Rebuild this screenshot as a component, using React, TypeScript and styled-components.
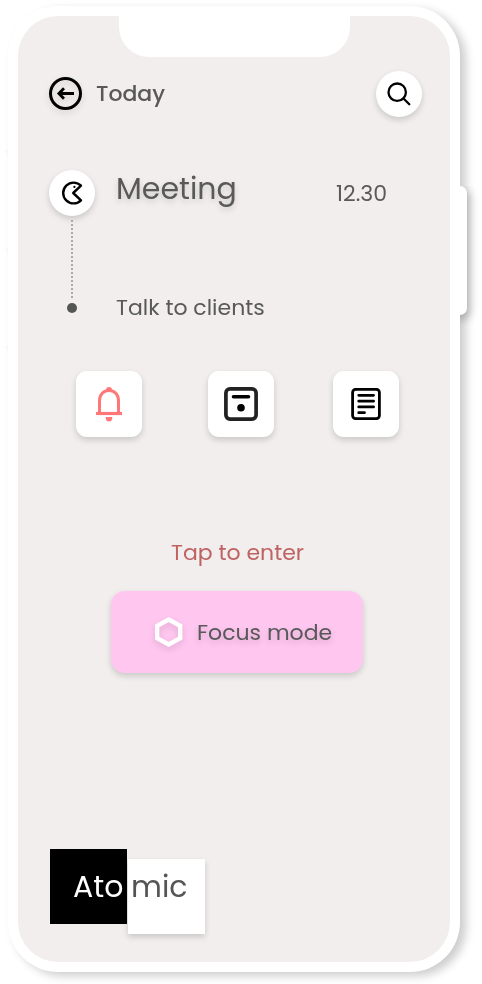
import React from "react";
import styled, { createGlobalStyle } from "styled-components";

const GlobalStyle = createGlobalStyle`
  * { box-sizing: border-box; }
  body {
    margin: 0;
    background: #fff;
    font-family: Poppins, Inter, "Open Sans", sans-serif;
    color: #595959;
  }
`;

const softShadow = "0 3px 6px rgba(0, 0, 0, 0.16)";

const Stage = styled.main`
  position: relative;
  width: 482px;
  height: 984px;
  overflow: hidden;
  padding: 6px 0 0 8px;
`;

const SideButton = styled.div<{ $top: number }>`
  position: absolute;
  left: 1px;
  top: ${(p) => p.$top}px;
  width: 14px;
  height: 62px;
  border-radius: 6px;
  background: #fff;
  box-shadow: 4px 4px 4px rgba(0, 0, 0, 0.04);
`;

const PowerButton = styled.div`
  position: absolute;
  left: 447px;
  top: 186px;
  width: 20px;
  height: 129px;
  border-radius: 7px;
  background: #fff;
  box-shadow: 4px 4px 8px rgba(0, 0, 0, 0.22);
  clip-path: inset(0 -20px -20px 13px);
`;

const Phone = styled.div`
  position: relative;
  width: 452px;
  height: 966px;
  padding: 10px;
  border-radius: 50px;
  background: #fff;
  box-shadow: 6px 4px 10px rgba(0, 0, 0, 0.2);
`;

const Screen = styled.div`
  width: 432px;
  height: 946px;
  border-radius: 40px;
  background: #f1eeed;
  display: flex;
  flex-direction: column;
  will-change: transform;
`;

const Notch = styled.div`
  width: 231px;
  height: 41px;
  margin-left: 101px;
  border-radius: 0 0 30px 30px;
  background: #fff;
  flex: none;
`;

const Header = styled.header`
  display: flex;
  align-items: center;
  height: 46px;
  margin: 14px 28px 0 31px;
`;

const Shadowed = styled.span`
  display: flex;
  filter: drop-shadow(0 3px 3px rgba(0, 0, 0, 0.12));
`;

const BackIcon = styled(Shadowed)`
  margin-top: -1px;
`;

const Round = styled.div`
  display: grid;
  place-items: center;
  width: 46px;
  height: 46px;
  border-radius: 50%;
  background: #fff;
  box-shadow: ${softShadow};
`;

const Label = styled.span<{ $size?: number; $weight?: number; $lift?: boolean }>`
  font-size: ${(p) => p.$size ?? 22}px;
  line-height: 32px;
  font-weight: ${(p) => p.$weight ?? 400};
  white-space: nowrap;
  text-shadow: ${(p) => (p.$lift ? "0 3px 6px rgba(0,0,0,.16)" : "none")};
`;

const HeaderTitle = styled.h1`
  flex: 1;
  display: flex;
  margin: 0 0 0 14px;
`;

const Event = styled.section`
  display: grid;
  grid-template-columns: 46px 241px 1fr;
  grid-template-rows: 46px 82px 20px;
  align-items: center;
  margin: 53px 31px 0;
  & > :nth-child(2) { margin: -8px 0 0 21px; }
  & > :nth-child(3) { margin-top: 2px; }
`;

const Connector = styled.div`
  align-self: end;
  justify-self: center;
  width: 2px;
  height: 78px;
  background: repeating-linear-gradient(#aaa 0 2px, transparent 2px 4px);
`;

const Client = styled.div`
  grid-column: 1 / -1;
  display: flex;
  align-items: center;
`;

const Dot = styled.i`
  width: 10px;
  height: 10px;
  margin: 0 39px 0 18px;
  border-radius: 50%;
  background: #555;
`;

const Actions = styled.nav`
  display: grid;
  grid-template-columns: 132px 125px 66px;
  margin: 53px 0 0 58px;
`;

const Tile = styled.button`
  display: grid;
  place-items: center;
  width: 66px;
  height: 66px;
  padding: 0;
  border: 0;
  border-radius: 11px;
  background: #fff;
  box-shadow: ${softShadow};
`;

const Prompt = styled.p`
  display: flex;
  margin: 100px 0 0 153px;
  color: #bf6262;
`;

const Focus = styled.button`
  display: flex;
  align-items: center;
  gap: 14px;
  width: 252px;
  height: 82px;
  margin: 22px 0 0 93px;
  padding: 1px 0 0 44px;
  border: 0;
  border-radius: 14px;
  background: #ffc6f0;
  color: inherit;
  font: inherit;
  box-shadow: ${softShadow};
  & > :first-child { margin-top: -2px; }
`;

const Brand = styled.footer`
  display: flex;
  gap: 1px;
  margin: auto 0 28px 32px;
`;

const BrandHalf = styled.div<{ $dark?: boolean }>`
  width: 77px;
  height: 75px;
  margin: ${(p) => (p.$dark ? "0 0 10px" : "10px 0 0")};
  padding: ${(p) => (p.$dark ? "22px 0 0 23px" : "12px 0 0 3px")};
  background: ${(p) => (p.$dark ? "#000" : "#fff")};
  color: ${(p) => (p.$dark ? "#fff" : "#555")};
  box-shadow: ${(p) => (p.$dark ? "none" : softShadow)};
`;

export default function App() {
  return (
    <>
      <GlobalStyle />
      <Stage>
        <SideButton $top={88} />
        <SideButton $top={186} />
        <SideButton $top={284} />
        <Phone>
          <Screen>
            <Notch />
            <Header>
              <BackIcon>
                <svg width="33" height="33" viewBox="0 0 33 33" fill="none" stroke="#000">
                  <circle cx="16.5" cy="16.5" r="15" strokeWidth="3" />
                  <path d="M25 16.5H10M15 11.3L9.9 16.5l5.1 5.2" strokeWidth="2.8" />
                </svg>
              </BackIcon>
              <HeaderTitle><Label $weight={500}>Today</Label></HeaderTitle>
              <Round>
                <svg width="24" height="24" viewBox="0 0 24 24" fill="none" stroke="#000" strokeWidth="2.3" strokeLinecap="round">
                  <circle cx="10.2" cy="10.2" r="8.7" />
                  <path d="M16.5 16.5l5.8 5.7" />
                </svg>
              </Round>
            </Header>
            <Event>
              <Round>
                <svg width="22" height="24" viewBox="0 0 22 24" fill="none" stroke="#000" strokeWidth="2.4" strokeLinejoin="round">
                  <path d="M20 4.7A10.4 10.4 0 1 0 20 19.3L12.2 12Z" />
                  <circle cx="13.4" cy="5.9" r="1.1" fill="#000" stroke="none" />
                </svg>
              </Round>
              <Label $size={30} $lift>Meeting</Label>
              <Label>12.30</Label>
              <Connector />
              <span /><span />
              <Client><Dot /><Label>Talk to clients</Label></Client>
            </Event>
            <Actions>
              <Tile aria-label="Reminder">
                <svg width="26" height="36" viewBox="0 0 26 36" fill="none" stroke="#ff7777">
                  <path d="M3.5 27V14.5C3.5 8.5 7.6 4.4 13 4.4s9.5 4.1 9.5 10.1V27" strokeWidth="3" />
                  <path d="M0 27.5h26" strokeWidth="3.2" />
                  <path d="M10 4a3 3 0 0 1 6 0M9.7 31h6.6a3.3 4.5 0 0 1-6.6 0Z" fill="#ff7777" stroke="none" />
                </svg>
              </Tile>
              <Tile aria-label="Calendar">
                <svg width="34" height="34" viewBox="0 0 34 34" fill="none">
                  <rect x="1.9" y="1.9" width="30.2" height="30.2" rx="4" stroke="#222" strokeWidth="3.7" />
                  <path d="M9.5 9.7h15" stroke="#000" strokeWidth="3.6" strokeLinecap="round" />
                  <circle cx="17" cy="20.8" r="3.8" fill="#000" />
                </svg>
              </Tile>
              <Tile aria-label="Notes">
                <svg width="30" height="32" viewBox="0 0 30 32" fill="none" stroke="#000" strokeWidth="2.8" strokeLinecap="round">
                  <rect x="1.6" y="1.4" width="26.8" height="29.2" rx="3" />
                  <path d="M7.7 7.3H22.6M7.7 13.2H22.6M7.7 18.9H22.6M7.7 24.7h5.8" strokeWidth="2.7" />
                </svg>
              </Tile>
            </Actions>
            <Prompt><Label>Tap to enter</Label></Prompt>
            <Focus>
              <Shadowed>
                <svg width="28" height="30" viewBox="0 0 28 30" fill="none" stroke="#fff" strokeWidth="4.3">
                  <path d="M13.7 2.5L25.2 8.8v12.4L13.7 27.5 2.2 21.2V8.8Z" />
                </svg>
              </Shadowed>
              <Label $lift>Focus mode</Label>
            </Focus>
            <Brand>
              <BrandHalf $dark><Label $size={30}>Ato</Label></BrandHalf>
              <BrandHalf><Label $size={30}>mic</Label></BrandHalf>
            </Brand>
          </Screen>
        </Phone>
        <PowerButton />
      </Stage>
    </>
  );
}
